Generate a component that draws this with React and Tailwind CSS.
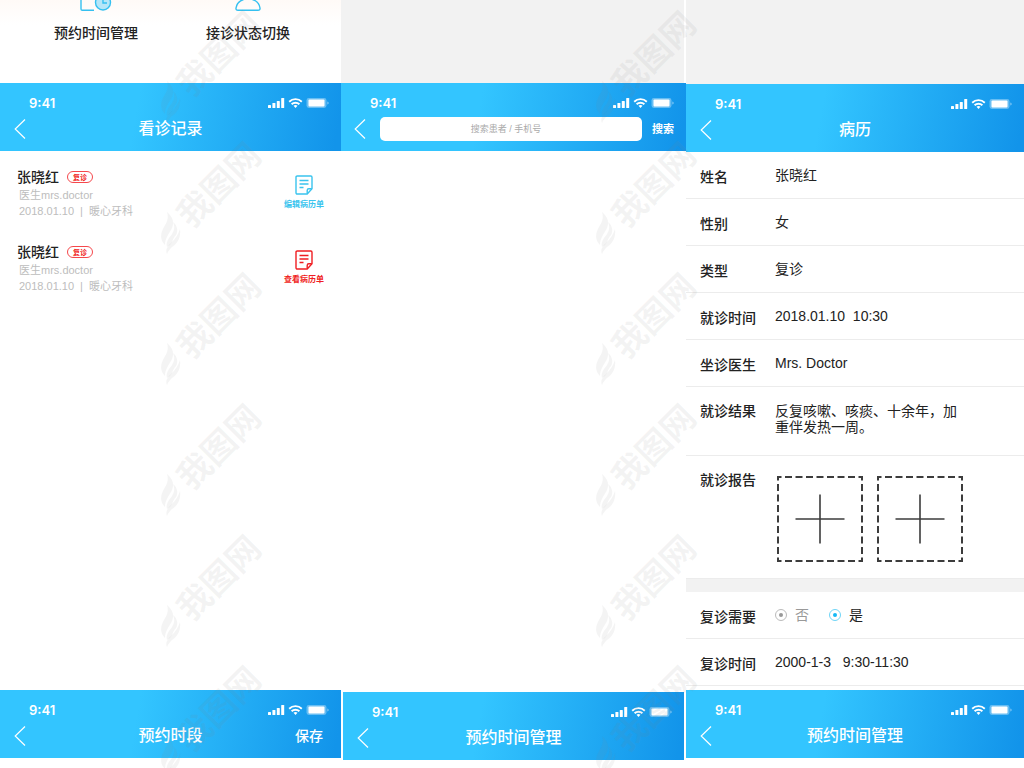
import { useState } from "react";

const visits = [
  { id: 1, name: "张晓红", tag: "复诊", doctor: "医生mrs.doctor", date: "2018.01.10", clinic: "暖心牙科", action: "编辑病历单", color: "text-[#3ac4ee]" },
  { id: 2, name: "张晓红", tag: "复诊", doctor: "医生mrs.doctor", date: "2018.01.10", clinic: "暖心牙科", action: "查看病历单", color: "text-[#f01e23]" },
];

const basics = [
  { label: "姓名", value: "张晓红" },
  { label: "性别", value: "女" },
  { label: "类型", value: "复诊" },
  { label: "就诊时间", value: "2018.01.10  10:30" },
  { label: "坐诊医生", value: "Mrs. Doctor" },
];

const marks = [0, 1, 2, 3, 4, 5];

function StatusIcons() {
  return (
    <svg width="61" height="12" viewBox="0 0 61 12" fill="#fff" aria-hidden="true">
      <rect x="0" y="8" width="3" height="3" rx=".6" />
      <rect x="4.4" y="6" width="3" height="5" rx=".6" />
      <rect x="8.8" y="4" width="3" height="7" rx=".6" />
      <rect x="13.2" y="1" width="3" height="10" rx=".6" />
      <g fill="none" stroke="#fff" strokeWidth="1.9">
        <path d="M21.2 4.7a9 9 0 0 1 12.6 0" />
        <path d="M23.6 7.3a5.6 5.6 0 0 1 7.8 0" />
      </g>
      <path d="M25.5 8.8a3 3 0 0 1 4 0l-2 2.2z" />
      <rect x="38.5" y="1" width="20" height="10" rx="2.4" fillOpacity=".35" />
      <rect x="40.5" y="2.5" width="16" height="7" rx="1" />
      <path d="M59.4 4.5v3c.8-.2 1.2-.8 1.2-1.5s-.4-1.3-1.2-1.5z" fillOpacity=".5" />
    </svg>
  );
}

function BackButton() {
  return (
    <button type="button" aria-label="返回" className="justify-self-start cursor-pointer">
      <svg width="12" height="22" viewBox="0 0 12 22" fill="none" stroke="#fff" strokeWidth="1.2">
        <path d="M11 1.5 1.2 11 11 20.5" />
      </svg>
    </button>
  );
}

function TopBar({ title, action, children, className = "" }) {
  return (
    <header className={`shrink-0 pt-3 pb-1 text-white bg-[linear-gradient(100deg,#33c5ff_40%,#1294ea_98%)] ${className}`}>
      <div className="flex h-4 items-center justify-between pl-[29px] pr-3">
        <span className="font-[Inter] text-[13px] leading-4 font-semibold">9:41</span>
        <StatusIcons />
      </div>
      {children || (
        <div className="grid h-9 grid-cols-[1fr_auto_1fr] items-center px-[14px]">
          <BackButton />
          <h2 className="text-base leading-5 font-medium">{title}</h2>
          {action && (
            <button type="button" className="justify-self-end pr-1 text-sm leading-5 font-medium cursor-pointer">{action}</button>
          )}
        </div>
      )}
    </header>
  );
}

function NoteIcon() {
  return (
    <svg width="18" height="20" viewBox="0 0 18 20" fill="none" stroke="currentColor" strokeWidth="1.4" aria-hidden="true">
      <path d="M1 2.2C1 1.5 1.5 1 2.2 1h13.6c.7 0 1.2.5 1.2 1.2v11.6L12.2 19h-10C1.5 19 1 18.5 1 17.8z" />
      <path d="M12.2 18.6v-3.2c0-.9.7-1.6 1.6-1.6h3" />
      <path d="M4.5 5.5h9M4.5 9h9M4.5 12.5h4" />
    </svg>
  );
}

function Field({ label, tall, children }) {
  return (
    <div className={`flex border-b border-[#ececec] ${tall ? "items-start pt-4" : "h-[47px] items-center"}`}>
      <dt className={`w-[89px] shrink-0 pl-[14px] text-sm leading-4 font-medium ${tall ? "" : "pt-[3px]"}`}>{label}</dt>
      <dd className="text-sm leading-4 whitespace-pre-wrap">{children}</dd>
    </div>
  );
}

function UploadBox({ label }) {
  return (
    <button type="button" aria-label={label} className="cursor-pointer">
      <svg width="86" height="86" viewBox="0 0 86 86" fill="none" stroke="#3c3c3c">
        <path d="M1 1h84v84H1z" strokeWidth="2" strokeDasharray="7 3.5" strokeDashoffset="3.5" />
        <path d="M18.5 43h49M43 18.5v49" strokeWidth="1.6" />
      </svg>
    </button>
  );
}

function WatermarkColumn({ className }) {
  return (
    <div className={`absolute top-[9px] flex flex-col gap-[13px] ${className}`}>
      {marks.map((m) => (
        <svg key={m} width="110" height="118" viewBox="0 0 110 118" fill="#808080" fillOpacity=".09" className="shrink-0 overflow-visible">
          <path d="M8 72c6 5 8 11 4 18-3 5-6 9-6 15-5-5-5-11-1-18 3-5 5-9 3-15z" />
          <path d="M14 82c3 7 0 11-4 16-2 3-3 6-2 9 6-3 5-8 9-12 2-3 2-9-3-13z" />
          <path d="M21 89c1 8-2 14-8 18-2 2-4 4-5 7-2-5 1-8 5-12 3-3 6-7 8-13z" />
          <text x="60" y="57" textAnchor="middle" fontSize="34" fontWeight="700" transform="rotate(-45 60 45)">我图网</text>
        </svg>
      ))}
    </div>
  );
}

export default function App() {
  const [followUp, setFollowUp] = useState("yes");
  const [keyword, setKeyword] = useState("");

  return (
    <main
      className="relative grid min-h-screen grid-cols-[341fr_345fr_338fr] overflow-hidden bg-white text-[#222]"
      style={{ fontFamily: '"Liberation Sans", "Noto Sans CJK SC", sans-serif' }}
    >
      {/* Visit records */}
      <section className="flex flex-col pb-[10px]">
        <nav className="grid h-[83px] grid-cols-2 items-start bg-linear-to-b from-[#fffaf7] to-white to-30% pr-[17px] pl-5">
          <button type="button" className="flex flex-col items-center gap-3 text-sm leading-5 font-medium cursor-pointer">
            <svg width="32" height="11" viewBox="0 0 32 11" fill="none" stroke="#35c0f0" strokeWidth="1.4">
              <path d="M1 0v9c0 .8.4 1.200 1.200 1.200H14" />
              <circle cx="23" cy="2.500" r="7.500" fill="#b5e6f8" />
              <path d="M23 0v3h4" />
            </svg>
            预约时间管理
          </button>
          <button type="button" className="flex flex-col items-center gap-3 text-sm leading-5 font-medium cursor-pointer">
            <svg width="26" height="11" viewBox="0 0 26 11" fill="none" stroke="#35c0f0" strokeWidth="1.4">
              <path d="M8.500-.5C4 1 1.500 4.500 1 8c-.2 1.500.6 2.200 2 2.200h20c1.400 0 2.200-.7 2-2.200-.5-3.500-3-7-7.500-8.500" />
            </svg>
            接诊状态切换
          </button>
        </nav>
        <TopBar title="看诊记录" />
        <ul className="flex flex-1 flex-col gap-[23px] pt-4 pr-[17px] pl-[17px]">
          {visits.map((v) => (
            <li key={v.id} className="flex items-start justify-between">
              <div>
                <div className="flex items-center gap-2">
                  <h3 className="text-sm leading-5 font-medium">{v.name}</h3>
                  <span className="flex h-3 w-[26px] items-center justify-center rounded-full border border-[#f5484c] text-[7px] leading-none font-bold text-[#f01e23]">{v.tag}</span>
                </div>
                <div className="pl-[2px] text-[11px] leading-4 text-[#bdbdbd]">
                  <p>{v.doctor}</p>
                  <p className="flex gap-[6px]"><span>{v.date}</span><span>|</span><span>{v.clinic}</span></p>
                </div>
              </div>
              <button type="button" className={`flex flex-col items-center gap-1 pt-2 text-[8px] leading-3 font-bold cursor-pointer ${v.color}`}>
                <NoteIcon />
                {v.action}
              </button>
            </li>
          ))}
        </ul>
        <TopBar title="预约时段" action="保存" />
      </section>

      {/* Patient search */}
      <section className="flex flex-col pb-2">
        <div className="h-[83px] border-r-2 border-white bg-[#f2f2f2]" />
        <TopBar>
          <form className="flex h-9 items-center pr-3 pl-[13px]" onSubmit={(e) => e.preventDefault()}>
            <BackButton />
            <input
              type="search"
              aria-label="搜索患者 / 手机号"
              placeholder="搜索患者 / 手机号"
              value={keyword}
              onChange={(e) => setKeyword(e.target.value)}
              className="mr-[10px] ml-[14px] h-6 min-w-0 flex-1 rounded-[5px] bg-white px-2 text-center text-[9px] text-[#333] outline-none placeholder:text-[#aaa]"
            />
            <button type="submit" className="text-[11px] leading-4 font-bold cursor-pointer">搜索</button>
          </form>
        </TopBar>
        <div className="flex-1" />
        <TopBar title="预约时间管理" className="mx-[2px]" />
      </section>

      {/* Medical record */}
      <section className="flex flex-col pb-[10px]">
        <div className="h-[84px] bg-[#f2f2f2]" />
        <TopBar title="病历" />
        <dl>
          {basics.map((f) => (
            <Field key={f.label} label={f.label}>{f.value}</Field>
          ))}
          <Field label="就诊结果" tall>
            <p className="w-[184px] pb-5">反复咳嗽、咳痰、十余年，加重伴发热一周。</p>
          </Field>
          <Field label="就诊报告" tall>
            <div className="flex gap-[14px] pt-1 pb-4 pl-[2px]">
              <UploadBox label="上传报告一" />
              <UploadBox label="上传报告二" />
            </div>
          </Field>
        </dl>
        <div className="h-[13px] bg-[#f2f2f2]" />
        <dl className="flex-1">
          <Field label="复诊需要">
            <div className="flex items-center gap-5">
              <label className={`flex items-center gap-2 ${followUp === "no" ? "" : "text-[#999]"}`}>
                <input type="radio" name="followUp" checked={followUp === "no"} onChange={() => setFollowUp("no")}
                  className="grid size-3 appearance-none place-items-center rounded-full border border-[#bbb] before:size-1 before:rounded-full before:bg-[#999] checked:border-[#6fd5f7] checked:before:bg-[#14b9f5]" />
                否
              </label>
              <label className={`flex items-center gap-2 ${followUp === "yes" ? "" : "text-[#999]"}`}>
                <input type="radio" name="followUp" checked={followUp === "yes"} onChange={() => setFollowUp("yes")}
                  className="grid size-3 appearance-none place-items-center rounded-full border border-[#bbb] before:size-1 before:rounded-full before:bg-[#999] checked:border-[#6fd5f7] checked:before:bg-[#14b9f5]" />
                是
              </label>
            </div>
          </Field>
          <Field label="复诊时间">{"2000-1-3   9:30-11:30"}</Field>
        </dl>
        <TopBar title="预约时间管理" />
      </section>

      <div className="pointer-events-none absolute inset-0 overflow-hidden" aria-hidden="true">
        <WatermarkColumn className="left-[159px]" />
        <WatermarkColumn className="left-[594px]" />
      </div>
    </main>
  );
}
